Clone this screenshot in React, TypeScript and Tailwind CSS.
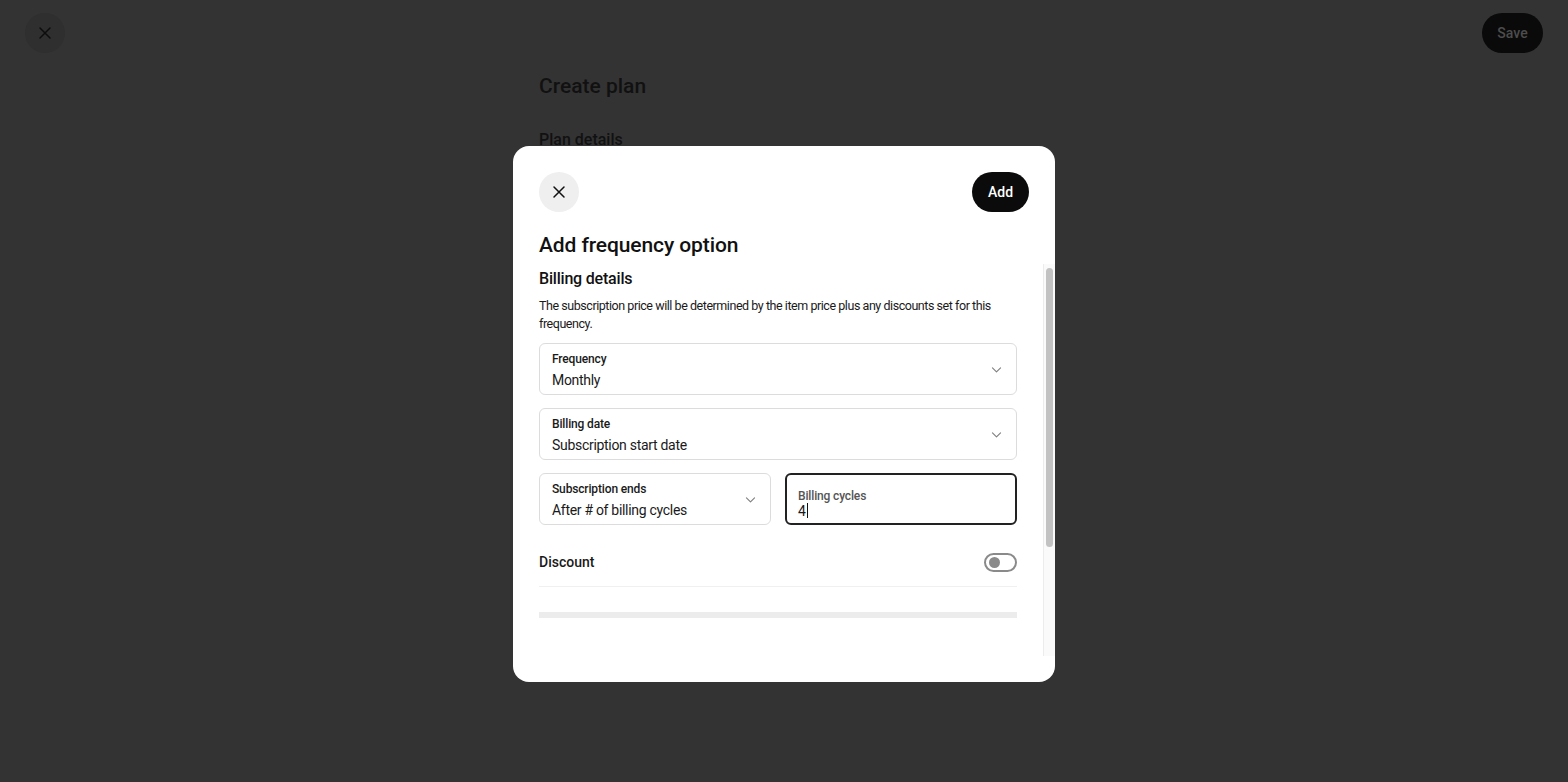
import React from "react";

function XIcon({ className }: { className?: string }) {
  return (
    <svg viewBox="0 0 24 24" className={className} fill="none" stroke="currentColor" strokeWidth={1.8} strokeLinecap="round">
      <path d="M6 6l12 12M18 6L6 18" />
    </svg>
  );
}

function Chevron() {
  return (
    <svg viewBox="0 0 16 16" className="w-[13px] h-[13px] text-[#808080]" fill="none" stroke="currentColor" strokeWidth={1.4} strokeLinecap="round" strokeLinejoin="round">
      <path d="M3 6l5 5 5-5" />
    </svg>
  );
}

function SelectField({ label, value }: { label: string; value: string }) {
  return (
    <div className="h-[52px] rounded-[6px] border border-[#dcdcdc] flex items-center pl-[12px] pr-[13px]">
      <div className="flex-1 flex flex-col min-w-0 self-start pt-[7px]">
        <span className="text-[12px] font-medium leading-[16px] text-[#1a1a1a] tracking-[-0.15px]">{label}</span>
        <span className="text-[14px] leading-[20px] text-[#1a1a1a] mt-[3px] tracking-[-0.3px]">{value}</span>
      </div>
      <Chevron />
    </div>
  );
}

export default function App() {
  return (
    <div
      className="relative w-[1568px] h-[782px] bg-[#333333] overflow-hidden"
      style={{ fontFamily: "Roboto, 'Noto Sans', sans-serif" }}
    >
      {/* Background page */}
      <div className="flex justify-between items-start px-[25px] pt-[13px]">
        <div className="w-[40px] h-[40px] rounded-full bg-[#2f2f2f] flex items-center justify-center text-[#0d0d0d]">
          <XIcon className="w-[20px] h-[20px]" />
        </div>
        <div className="h-[40px] w-[61px] rounded-full bg-[#0a0a0a] text-[#4d4d4d] text-[14px] font-medium flex items-center justify-center">
          Save
        </div>
      </div>
      <div className="absolute left-[539px] top-[72px] text-[#111]">
        <div className="text-[21px] font-medium leading-[28px]">Create plan</div>
        <div className="text-[16px] font-medium leading-[22px] mt-[29px]">Plan details</div>
      </div>

      {/* Modal */}
      <div className="absolute left-[513px] top-[146px] w-[542px] h-[536px] bg-white rounded-[16px] flex flex-col pt-[26px] pl-[26px] pb-[26px]">
        <div className="flex items-center justify-between pr-[26px]">
          <div className="w-[40px] h-[40px] rounded-full bg-[#efefef] flex items-center justify-center text-[#111]">
            <XIcon className="w-[20px] h-[20px]" />
          </div>
          <div className="h-[40px] w-[57px] rounded-full bg-[#0b0b0b] text-white text-[14px] font-medium flex items-center justify-center">
            Add
          </div>
        </div>
        <div className="mt-[19px] text-[21px] font-medium leading-[28px] text-[#111] tracking-[-0.1px]">
          Add frequency option
        </div>
        <div className="flex-1 flex mt-[5px] min-h-0">
          <div className="w-[478px] flex flex-col pt-[4px]">
            <div className="text-[16px] font-medium leading-[22px] text-[#111] tracking-[-0.2px]">Billing details</div>
            <div className="mt-[7px] text-[12.5px] leading-[18px] text-[#1a1a1a] tracking-[-0.45px]">
              <div className="whitespace-nowrap">
                The subscription price will be determined by the item price plus any discounts set for this
              </div>
              <div>frequency.</div>
            </div>
            <div className="mt-[10px] flex flex-col gap-[13px]">
              <SelectField label="Frequency" value="Monthly" />
              <SelectField label="Billing date" value="Subscription start date" />
              <div className="grid grid-cols-2 gap-[14px]">
                <SelectField label="Subscription ends" value="After # of billing cycles" />
                <div className="h-[52px] rounded-[6px] border-2 border-[#222] flex flex-col pl-[11px] pt-[14px]">
                  <span className="text-[12px] font-medium leading-[14px] text-[#555] tracking-[-0.15px]">Billing cycles</span>
                  <span className="text-[14px] leading-[14px] text-[#1a1a1a] flex items-center">
                    4<span className="inline-block w-[1px] h-[15px] bg-[#111] ml-[1px]" />
                  </span>
                </div>
              </div>
            </div>
            <div className="mt-[19px] flex items-center justify-between h-[43px] border-b border-[#f0f0f0] pb-[5px]">
              <span className="text-[14px] font-medium text-[#1a1a1a]">Discount</span>
              <div className="w-[33px] h-[19px] rounded-full border-2 border-[#8a8a8a] bg-white flex items-center pl-[3px]">
                <div className="w-[11px] h-[11px] rounded-full bg-[#8a8a8a]" />
              </div>
            </div>
            <div className="mt-[25px] h-[6px] bg-[#ececec]" />
          </div>
          <div className="ml-[26px] w-[12px] border-l border-[#ececec] bg-[#fafafa] pt-[4px] px-[2px]">
            <div className="h-[279px] rounded-full bg-[#c2c2c2] w-[7px]" />
          </div>
        </div>
      </div>
    </div>
  );
}
